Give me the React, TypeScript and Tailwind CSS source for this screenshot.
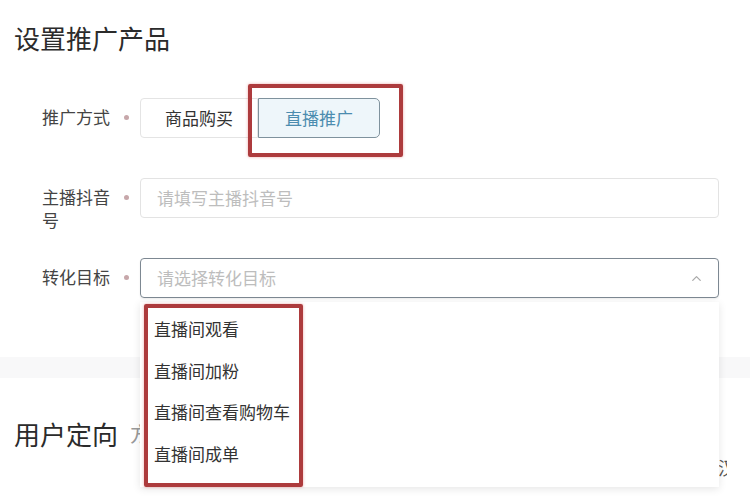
import { ChevronUp } from "lucide-react";

const options = ["直播间观看", "直播间加粉", "直播间查看购物车", "直播间成单"];

function Dot() {
  return <span className="mt-[17px] ml-[10px] h-[5px] w-[5px] shrink-0 rounded-full bg-[#c7a7aa]" />;
}

export default function App() {
  return (
    <div className="relative h-[500px] w-[750px] overflow-hidden bg-white font-['Noto_Sans_CJK_SC','Noto_Sans',sans-serif] text-[#333]">
      {/* section: product */}
      <section className="h-[357px] pl-[14px] pt-[20px]">
        <h1 className="text-[26px] leading-[36px] text-[#2b2b2b]">设置推广产品</h1>

        <div className="mt-[42px] flex flex-col gap-[40px] pl-[28px]">
          {/* 推广方式 */}
          <div className="flex h-[40px] items-start">
            <div className="flex w-[98px] shrink-0 items-start">
              <span className="w-[72px] pt-[7px] text-[17px] leading-[23px] text-[#444]">推广方式</span>
              <Dot />
            </div>
            <div className="flex">
              <button className="h-[40px] w-[118px] rounded-l-[4px] border border-[#e4e4e4] bg-white text-[17px] text-[#333]">
                商品购买
              </button>
              <button className="relative h-[40px] w-[122px] rounded-r-[5px] border border-[#7f929d] bg-[#eef6fa] text-[17px] text-[#4b8caf]">
                直播推广
                <span className="absolute -left-[11px] -top-[15px] h-[73px] w-[155px] rounded-[2px] border-[4px] border-[#ad3b3d] shadow-[0_0_3px_rgba(220,80,80,0.5)]" />
              </button>
            </div>
          </div>

          {/* 主播抖音号 */}
          <div className="flex h-[40px] items-start">
            <div className="flex w-[98px] shrink-0 items-start">
              <span className="w-[72px] pt-[7px] text-[17px] leading-[23px] text-[#444]">主播抖音号</span>
              <Dot />
            </div>
            <div className="flex h-[40px] w-[579px] items-center rounded-[4px] border border-[#e3e3e3] px-[16px] text-[17px] text-[#bdbdbd]">
              请填写主播抖音号
            </div>
          </div>

          {/* 转化目标 */}
          <div className="flex h-[40px] items-start">
            <div className="flex w-[98px] shrink-0 items-start">
              <span className="w-[72px] pt-[7px] text-[17px] leading-[23px] text-[#444]">转化目标</span>
              <Dot />
            </div>
            <div className="relative w-[579px]">
              <div className="flex h-[40px] items-center justify-between rounded-[4px] border border-[#7d8892] pl-[16px] pr-[14px] text-[17px] text-[#bdbdbd] shadow-[0_1px_2px_rgba(0,0,0,0.08)]">
                <span>请选择转化目标</span>
                <ChevronUp size={15} strokeWidth={2} className="text-[#a9a9a9]" />
              </div>

              {/* dropdown */}
              <div className="absolute left-0 top-[44px] z-10 h-[185px] w-[579px] bg-white shadow-[0_2px_8px_rgba(0,0,0,0.1)]">
                <div className="relative ml-[4px] mt-[2px] flex h-[183px] w-[159px] flex-col pt-[7px] pl-[10px]">
                  {options.map((o) => (
                    <div key={o} className="h-[41.5px] text-[17px] leading-[36px] text-[#333]">
                      {o}
                    </div>
                  ))}
                  <span className="absolute inset-0 rounded-[2px] border-[4px] border-[#ad3b3d] shadow-[0_0_3px_rgba(220,80,80,0.5)]" />
                </div>
              </div>
            </div>
          </div>
        </div>
      </section>

      <div className="h-[21px] bg-[#f8f8f9]" />

      {/* section: audience */}
      <section className="flex items-center pl-[14px] pt-[38px]">
        <h2 className="text-[26px] leading-[36px] text-[#2b2b2b]">用户定向</h2>
        <span className="ml-[12px] text-[20px] text-[#999]">方式</span>
      </section>

      <span className="absolute left-[718px] top-[456px] w-[9px] overflow-hidden text-[18px] leading-[22px] text-[#555]">
        汉
      </span>
    </div>
  );
}
